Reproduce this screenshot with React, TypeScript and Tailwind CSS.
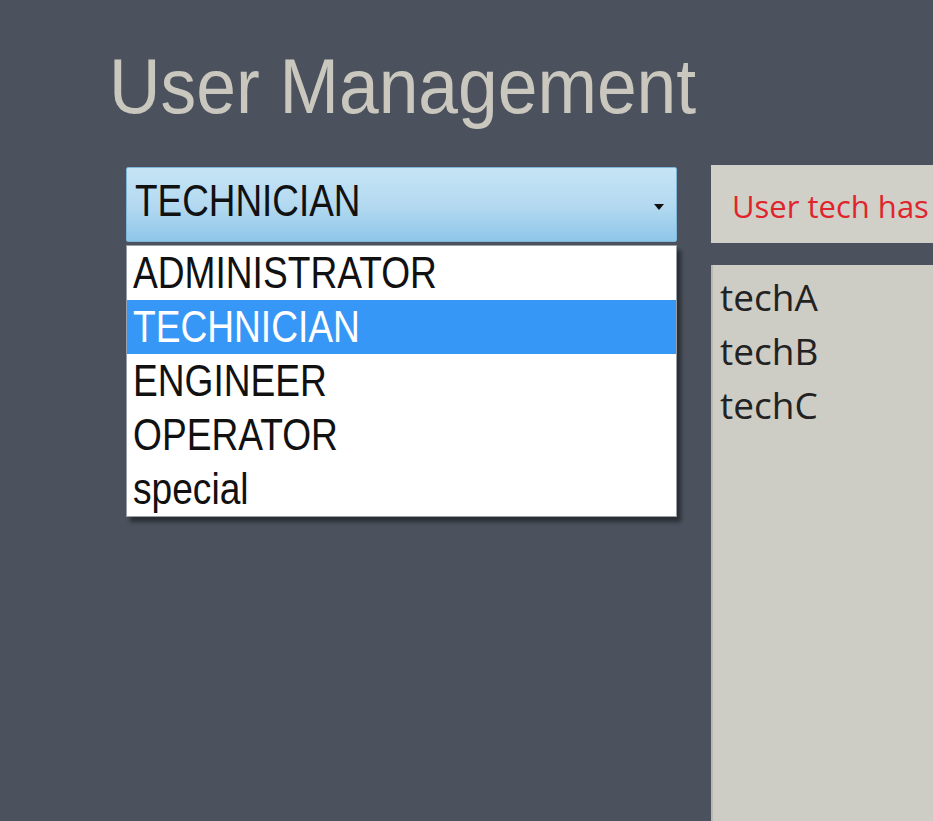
const roles = ["ADMINISTRATOR", "TECHNICIAN", "ENGINEER", "OPERATOR", "special"];
const users = ["techA", "techB", "techC"];

const sans = { fontFamily: '"Liberation Sans", Arial, sans-serif' };

export default function App() {
  const selected = "TECHNICIAN";

  return (
    <div className="w-[933px] h-[821px] overflow-hidden bg-[#4b525d]">
      <h1 style={sans} className="pl-[109px] pt-[47px] text-[78px] leading-none text-[#c9c7be]">
        <span className="inline-block origin-left scale-x-[0.915]">User Management</span>
      </h1>

      <div className="flex mt-[40px]">
        <div className="ml-[126px] w-[551px] shrink-0" style={sans}>
          {/* select box */}
          <div className="mt-[2px] h-[75px] flex items-center justify-between pl-[8px] pr-[12px] rounded-[2px] border border-[#7fb5d6] bg-gradient-to-b from-[#c6e4f5] via-[#b4daf1] to-[#8fc6e8]">
            <span className="inline-block origin-left scale-x-[0.82] text-[45px] leading-none text-[#111] -mt-[8px]">
              {selected}
            </span>
            <svg width="10" height="6" viewBox="0 0 10 6" className="mt-[4px]">
              <path d="M0 0h10L5 6z" fill="#111" />
            </svg>
          </div>

          {/* open list */}
          <div className="mt-[3px] bg-white border border-[#9aa0a8] shadow-[4px_5px_4px_rgba(0,0,0,0.45)]">
            {roles.map((r) => (
              <div
                key={r}
                className={
                  "h-[54px] flex items-center pl-[6px] text-[45px] leading-none " +
                  (r === selected ? "bg-[#3797f7] text-white" : "text-[#111]")
                }
              >
                <span className="inline-block origin-left scale-x-[0.825] -mt-[2px]">{r}</span>
              </div>
            ))}
          </div>
        </div>

        <div
          className="ml-[34px] flex-1 min-w-[260px] flex flex-col"
          style={{ fontFamily: '"Open Sans", "Noto Sans", sans-serif' }}
        >
          <div className="h-[78px] bg-[#d0d0c9] flex items-center pl-[21px] pt-[4px]">
            <span className="text-[31px] leading-none text-[#e0242c] whitespace-nowrap">
              User tech has been saved
            </span>
          </div>
          <div className="mt-[22px] h-[560px] bg-[#cdcdc6] border-l-2 border-[#b9b9b2] pl-[7px] pt-[4px]">
            {users.map((u) => (
              <div key={u} className="h-[54px] flex items-center text-[37px] leading-none text-[#222]">
                {u}
              </div>
            ))}
          </div>
        </div>
      </div>
    </div>
  );
}
